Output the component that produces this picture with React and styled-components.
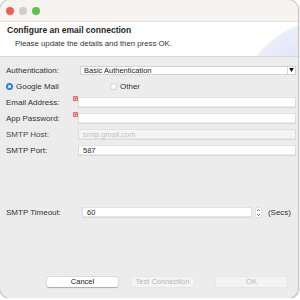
import React from "react";
import styled, {createGlobalStyle} from "styled-components";

const Global = createGlobalStyle`
  html, body {
    margin: 0;
    padding: 0;
    background: #ffffff;
  }
  body {
    font-family: "Liberation Sans", Arial, sans-serif;
    color: #2e2e2e;
  }
`;

const ErrorMark = () => (
    <Marker viewBox="0 0 5 5" width="5" height="5">
        <rect x="0.4" y="0.4" width="4.2" height="4.2" rx="0.6" fill="#f3b8b8" stroke="#e04848" strokeWidth="0.8"/>
        <path d="M1.7 1.7 L3.3 3.3 M3.3 1.7 L1.7 3.3" stroke="#c82020" strokeWidth="0.7"/>
    </Marker>
);

const App = () => {
    return (
        <>
            <Global/>
            <Window>
                <TitleBar>
                    <Light $color="#ee5f57"/>
                    <Light $color="#d1cecb"/>
                    <Light $color="#5cc34f"/>
                </TitleBar>
                <Header>
                    <Title>Configure an email connection</Title>
                    <Subtitle>Please update the details and then press OK.</Subtitle>
                </Header>
                <Form>
                    <Row>
                        <Label>Authentication:</Label>
                        <Select $offset={2}>
                            <span>Basic Authentication</span>
                            <SelectArrow>
                                <svg viewBox="0 0 6 5" width="5" height="4">
                                    <path d="M0 0 H6 L3 5 Z" fill="#111"/>
                                </svg>
                            </SelectArrow>
                        </Select>
                    </Row>
                    <Row>
                        <Radio>
                            <RadioDot $checked/>
                            Google Mail
                        </Radio>
                        <Radio $left={104}>
                            <RadioDot/>
                            Other
                        </Radio>
                    </Row>
                    <Row>
                        <Label>Email Address:</Label>
                        <Field>
                            <ErrorMark/>
                            <Input $h={11}/>
                        </Field>
                    </Row>
                    <Row>
                        <Label>App Password:</Label>
                        <Field>
                            <ErrorMark/>
                            <Input $h={11}/>
                        </Field>
                    </Row>
                    <Row>
                        <Label $muted>SMTP Host:</Label>
                        <Field>
                            <Input $h={11} $disabled>
                                <Placeholder>smtp.gmail.com</Placeholder>
                            </Input>
                        </Field>
                    </Row>
                    <Row>
                        <Label>SMTP Port:</Label>
                        <Field>
                            <Input $h={11}>587</Input>
                        </Field>
                    </Row>
                    <Row $top={46}>
                        <Label>SMTP Timeout:</Label>
                        <Field $offset={4}>
                            <TimeoutBox>
                                <Input $h={11}>60</Input>
                                <Spinner>
                                    <svg viewBox="0 0 7 11" width="7" height="11">
                                        <rect x="0.5" y="0.5" width="6" height="10" rx="2" fill="#fff" stroke="#cfcfcf"
                                              strokeWidth="0.6"/>
                                        <path d="M2 4 L3.5 2.4 L5 4 M2 7 L3.5 8.6 L5 7" fill="none" stroke="#555"
                                              strokeWidth="0.8"/>
                                    </svg>
                                </Spinner>
                                <Unit>(Secs)</Unit>
                            </TimeoutBox>
                        </Field>
                    </Row>
                </Form>
                <Footer>
                    <Button $w={71}>Cancel</Button>
                    <Button $w={63} $disabled>Test Connection</Button>
                    <Button $w={71} $disabled $gap={9}>OK</Button>
                </Footer>
            </Window>
        </>
    );
};

export default App;

const Window = styled.div`
  width: 298px;
  height: 298px;
  display: flex;
  flex-direction: column;
  background: #ececec;
  border-radius: 10px;
  overflow: hidden;
  box-shadow: 0 0 0 1px #c6c6c6, 1px 1px 2px rgba(0, 0, 0, 0.25);
`;

const TitleBar = styled.div`
  height: 21px;
  flex: none;
  display: flex;
  align-items: center;
  gap: 5px;
  padding-left: 6px;
  background: #f6f3f0;
`;

const Light = styled.span`
  width: 8px;
  height: 8px;
  border-radius: 50%;
  background: ${p => p.$color};
`;

const Header = styled.div`
  height: 36px;
  flex: none;
  padding: 2px 7px 0;
  box-sizing: border-box;
  background: radial-gradient(circle at 332px 92px, #d3d9f0 0, #e0e5f5 60px, #ebeef9 94px, #ffffff 96px);
  border-bottom: 1px solid #d9d9d9;
  border-top: 1px solid #e4e1de;
`;

const Title = styled.div`
  font-size: 8.5px;
  font-weight: bold;
  line-height: 12px;
  color: #1e1e1e;
`;

const Subtitle = styled.div`
  font-size: 7.8px;
  line-height: 12px;
  margin-top: 2px;
  padding-left: 8px;
  color: #333;
`;

const Form = styled.div`
  flex: 1;
  padding: 5px 2px 0 6px;
  display: flex;
  flex-direction: column;
`;

const Row = styled.div`
  height: 16px;
  display: grid;
  grid-template-columns: 72px 1fr;
  align-items: center;
  position: relative;
  margin-top: ${p => p.$top || 0}px;
`;

const Label = styled.div`
  font-size: 8px;
  color: ${p => p.$muted ? "#4a4a4a" : "#333"};
`;

const Field = styled.div`
  position: relative;
  margin-left: ${p => p.$offset || 0}px;
  display: flex;
  align-items: center;
`;

const Marker = styled.svg`
  position: absolute;
  left: -5px;
  top: -1px;
`;

const Input = styled.div`
  flex: 1;
  height: ${p => p.$h}px;
  box-sizing: border-box;
  background: ${p => p.$disabled ? "#f4f4f4" : "#ffffff"};
  border: 1px solid #dcdcdc;
  border-top-color: #e2e2e2;
  box-shadow: inset 0 -1px 0 #e6e6e6;
  font-size: 7.5px;
  line-height: ${p => p.$h - 2}px;
  padding-left: 4px;
  color: #2a2a2a;
`;

const Placeholder = styled.span`
  color: #c2c2c2;
`;

const Select = styled.div`
  margin-left: ${p => p.$offset}px;
  height: 9px;
  box-sizing: border-box;
  background: #fff;
  border: 1px solid #d2d2d2;
  display: flex;
  align-items: center;
  justify-content: space-between;
  font-size: 7.5px;
  padding-left: 3px;
  color: #222;
`;

const SelectArrow = styled.span`
  width: 7px;
  height: 7px;
  display: flex;
  align-items: center;
  justify-content: center;
  border-left: 1px solid #d6d6d6;
`;

const Radio = styled.label`
  position: absolute;
  left: ${p => p.$left || 0}px;
  display: flex;
  align-items: center;
  gap: 3px;
  font-size: 8px;
  color: #333;
`;

const RadioDot = styled.span`
  width: 7px;
  height: 7px;
  box-sizing: border-box;
  border-radius: 50%;
  background: #ffffff;
  border: ${p => p.$checked ? "2px solid #2f7cf6" : "1px solid #cfcfcf"};
`;

const TimeoutBox = styled.div`
  flex: 1;
  display: flex;
  align-items: center;
`;

const Spinner = styled.span`
  display: flex;
  margin-left: 3px;
`;

const Unit = styled.span`
  font-size: 8px;
  margin-left: 6px;
  margin-right: 5px;
  color: #333;
`;

const Footer = styled.div`
  flex: none;
  height: 21px;
  display: flex;
  justify-content: flex-end;
  align-items: flex-start;
  gap: 13px;
  padding-right: 11px;
`;

const Button = styled.div`
  width: ${p => p.$w}px;
  height: 10px;
  margin-left: ${p => p.$gap || 0}px;
  border-radius: 2px;
  background: ${p => p.$disabled ? "#f3f3f3" : "#ffffff"};
  box-shadow: ${p => p.$disabled ? "0 0 0 0.5px #e2e2e2" : "0 0.5px 1px rgba(0,0,0,0.25), 0 0 0 0.5px #d6d6d6"};
  font-size: 7.5px;
  line-height: 10px;
  text-align: center;
  color: ${p => p.$disabled ? "#b9b9b9" : "#222"};
`;
